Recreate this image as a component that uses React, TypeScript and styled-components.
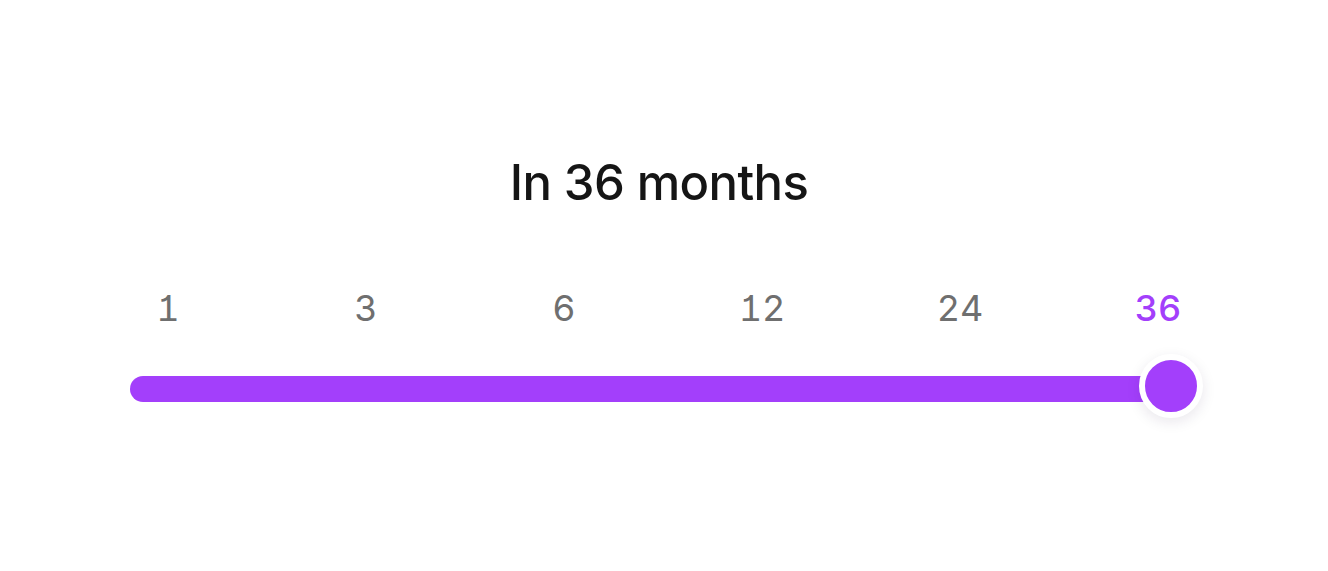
import styled, { createGlobalStyle } from "styled-components";

const GlobalStyle = createGlobalStyle`
    html, body {
        margin: 0;
        padding: 0;
        background: #ffffff;
    }

    body {
        font-family: Inter, "Noto Sans", sans-serif;
    }
`;

const Page = styled.main`
    height: 571px;
    display: flex;
    flex-direction: column;
    align-items: center;
    padding-top: 153px;
    box-sizing: border-box;
`;

const Title = styled.h1`
    margin: 0;
    font-size: 49px;
    font-weight: 500;
    line-height: 60px;
    letter-spacing: -0.6px;
    color: #151515;
    transform: translateX(-5px);
`;

const Slider = styled.div`
    width: 1068px;
    margin-top: 73px;
`;

const Stops = styled.ol`
    display: grid;
    grid-template-columns: repeat(6, 198px);
    margin: 0 -60px 0 -61px;
    padding: 0;
    list-style: none;
`;

const Stop = styled.li<{ $active: boolean }>`
    text-align: center;
    font-size: 36px;
    line-height: 44px;
    font-weight: ${p => (p.$active ? 500 : 400)};
    color: ${p => (p.$active ? "#a33ffb" : "#6f6f6f")};
    font-feature-settings: "tnum", "cv01";
`;

const TrackRow = styled.div`
    height: 64px;
    margin-top: 24px;
    padding-top: 22px;
    box-sizing: border-box;
    position: relative;
`;

const Track = styled.div`
    height: 26px;
    border-radius: 13px;
    background: #a33ffb;
`;

const Thumb = styled.button`
    width: 64px;
    height: 64px;
    padding: 0;

    position: absolute;
    top: 0;
    right: -5px;

    box-sizing: border-box;
    border: 6px solid #ffffff;
    border-radius: 50%;
    background: #a33ffb;
    box-shadow: 0 4px 14px rgba(40, 20, 70, 0.1);

    cursor: pointer;
`;

const stops = [1, 3, 6, 12, 24, 36];

const App = () => {
    const selected = 36;

    return (
        <>
            <GlobalStyle />
            <Page>
                <Title>In {selected} months</Title>
                <Slider>
                    <Stops>
                        {stops.map(value => (
                            <Stop key={value} $active={value === selected}>
                                {value}
                            </Stop>
                        ))}
                    </Stops>
                    <TrackRow>
                        <Track />
                        <Thumb aria-label={`${selected} months`} />
                    </TrackRow>
                </Slider>
            </Page>
        </>
    );
};

export default App;
